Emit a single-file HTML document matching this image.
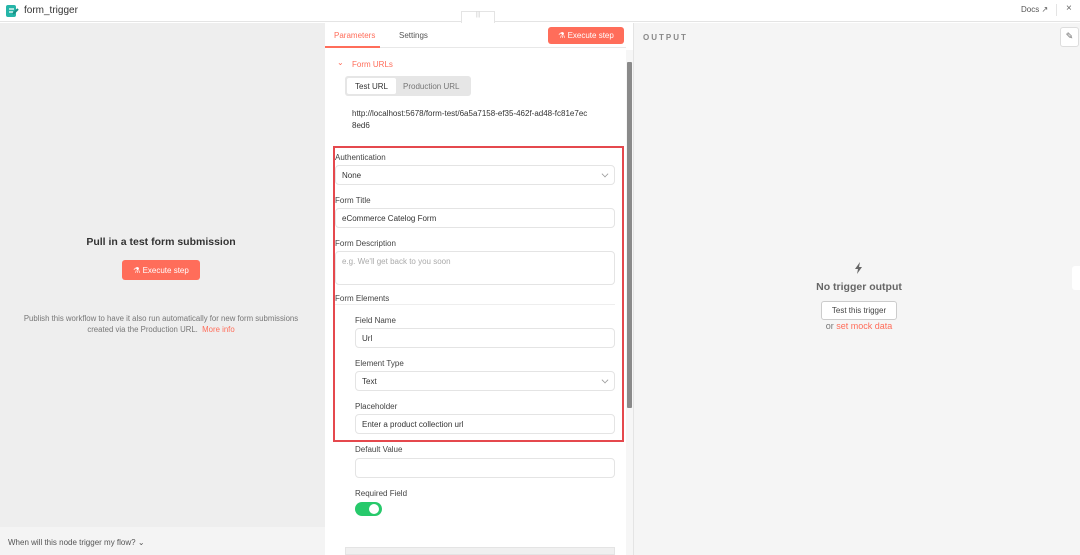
<!DOCTYPE html><html><head><style>
*{margin:0;padding:0;box-sizing:border-box}
body{width:1080px;height:555px;overflow:hidden;font-family:"Liberation Sans",sans-serif;position:relative;background:#fff;color:#333}
.a{position:absolute}
.lbl{font-size:8px;color:#444}
.inp{position:absolute;height:20px;border:1px solid #e4e4e4;border-radius:4px;background:#fff;font-size:8px;color:#333;padding:5px 6px}
.chev{position:absolute;right:6px;top:5px;width:6px;height:6px;border-right:1px solid #999;border-bottom:1px solid #999;transform:rotate(45deg) scale(.8)}
.btn{background:#ff6d5a;color:#fff;border-radius:3px;font-size:8px;text-align:center}
</style></head><body>
<div class="a" style="left:0;top:0;width:1080px;height:22px;border-bottom:1px solid #e4e4e4;background:#fff"></div>
<svg class="a" style="left:6px;top:4px" width="13" height="14" viewBox="0 0 13 14"><rect x="0" y="1" width="10" height="12" rx="2" fill="#25b5a8"/><path d="M3 5h5M3 8h4" stroke="#fff" stroke-width="1.2"/><path d="M7 10l5-5" stroke="#1a8f85" stroke-width="2"/></svg>
<div class="a" style="left:24px;top:5px;font-size:10px;color:#333">form_trigger</div>
<div class="a" style="left:1021px;top:5px;font-size:8px;color:#555">Docs ↗</div>
<div class="a" style="left:1056px;top:4px;width:1px;height:12px;background:#e4e4e4"></div>
<div class="a" style="left:1066px;top:3px;font-size:10px;color:#666">×</div>
<div class="a" style="left:461px;top:11px;width:34px;height:12px;border:1px solid #e4e4e4;border-bottom:none;background:#fff;font-size:6px;color:#ccc;text-align:center">|||</div>
<!-- left -->
<div class="a" style="left:0;top:23px;width:325px;height:504px;background:#eeeeee"></div>
<div class="a" style="left:0;top:527px;width:325px;height:28px;background:#f4f4f4;font-size:8px;color:#555;padding:11px 8px">When will this node trigger my flow? ⌄</div>
<div class="a" style="left:0;top:236px;width:322px;text-align:center;font-size:10.5px;font-weight:bold;color:#333">Pull in a test form submission</div>
<div class="a btn" style="left:122px;top:260px;width:78px;height:20px;padding-top:6px">⚗ Execute step</div>
<div class="a" style="left:0;top:313px;width:322px;text-align:center;font-size:7.8px;color:#777;line-height:11px">Publish this workflow to have it also run automatically for new form submissions<br>created via the Production URL. &nbsp;<span style="color:#ff6d5a">More info</span></div>
<!-- center -->
<div class="a" style="left:325px;top:23px;width:308px;height:532px;background:#fff"></div>
<div class="a" style="left:325px;top:47px;width:301px;height:1px;background:#e8e8e8"></div>
<div class="a" style="left:334px;top:31px;font-size:8px;color:#ff6d5a">Parameters</div>
<div class="a" style="left:325px;top:46px;width:55px;height:2px;background:#ff6d5a"></div>
<div class="a" style="left:399px;top:31px;font-size:8px;color:#555">Settings</div>
<div class="a btn" style="left:548px;top:27px;width:76px;height:17px;padding-top:4px">⚗ Execute step</div>
<div class="a" style="left:626px;top:50px;width:7px;height:505px;background:#f6f6f6"></div>
<div class="a" style="left:627px;top:62px;width:5px;height:346px;background:#8a8a8a;border-radius:1px"></div>
<div class="a" style="left:337px;top:58px;font-size:8px;color:#ff6d5a">⌄</div>
<div class="a" style="left:352px;top:60px;font-size:8px;color:#ff6d5a">Form URLs</div>
<div class="a" style="left:345px;top:76px;width:126px;height:20px;background:#e6e6e6;border-radius:3px"></div>
<div class="a" style="left:347px;top:78px;width:49px;height:16px;background:#fff;border-radius:2px;font-size:8px;text-align:center;padding-top:4px">Test URL</div>
<div class="a" style="left:403px;top:82px;font-size:8px;color:#777">Production URL</div>
<div class="a" style="left:352px;top:108px;font-size:8px;color:#333;line-height:12px">http://localhost:5678/form-test/6a5a7158-ef35-462f-ad48-fc81e7ec<br>8ed6</div>
<div class="a lbl" style="left:335px;top:153px">Authentication</div>
<div class="inp" style="left:335px;top:165px;width:280px">None<span class="chev"></span></div>
<div class="a lbl" style="left:335px;top:196px">Form Title</div>
<div class="inp" style="left:335px;top:208px;width:280px">eCommerce Catelog Form</div>
<div class="a lbl" style="left:335px;top:239px">Form Description</div>
<div class="inp" style="left:335px;top:251px;width:280px;height:34px;color:#aaa">e.g. We'll get back to you soon</div>
<div class="a lbl" style="left:335px;top:294px">Form Elements</div>
<div class="a" style="left:335px;top:304px;width:280px;height:1px;background:#eee"></div>
<div class="a lbl" style="left:355px;top:316px">Field Name</div>
<div class="inp" style="left:355px;top:328px;width:260px">Url</div>
<div class="a lbl" style="left:355px;top:359px">Element Type</div>
<div class="inp" style="left:355px;top:371px;width:260px">Text<span class="chev"></span></div>
<div class="a lbl" style="left:355px;top:402px">Placeholder</div>
<div class="inp" style="left:355px;top:414px;width:260px">Enter a product collection url</div>
<div class="a" style="left:333px;top:146px;width:291px;height:296px;border:2px solid #e5484d"></div>
<div class="a lbl" style="left:355px;top:445px">Default Value</div>
<div class="inp" style="left:355px;top:458px;width:260px"></div>
<div class="a lbl" style="left:355px;top:489px">Required Field</div>
<div class="a" style="left:355px;top:502px;width:27px;height:14px;background:#27c96b;border-radius:7px"></div>
<div class="a" style="left:369px;top:504px;width:10px;height:10px;background:#fff;border-radius:5px"></div>
<div class="a" style="left:345px;top:547px;width:270px;height:8px;background:#f0f0f0;border:1px solid #e4e4e4"></div>
<!-- right -->
<div class="a" style="left:633px;top:23px;width:447px;height:532px;background:#f5f5f5;border-left:1px solid #e4e4e4"></div>
<div class="a" style="left:643px;top:33px;font-size:8px;letter-spacing:2px;color:#888;font-weight:bold">OUTPUT</div>
<div class="a" style="left:1060px;top:27px;width:19px;height:20px;background:#fff;border:1px solid #ddd;border-radius:3px;font-size:9px;color:#666;text-align:center;padding-top:3px">✎</div>
<svg class="a" style="left:854px;top:262px" width="9" height="12" viewBox="0 0 9 12"><path d="M6 0L1 7h3l-1 5 5-7H5z" fill="#666"/></svg>
<div class="a" style="left:780px;top:281px;width:158px;text-align:center;font-size:10.5px;font-weight:bold;color:#666">No trigger output</div>
<div class="a" style="left:821px;top:301px;width:76px;height:19px;background:#fff;border:1px solid #ccc;border-radius:3px;font-size:8px;color:#444;text-align:center;padding-top:4px">Test this trigger</div>
<div class="a" style="left:780px;top:321px;width:158px;text-align:center;font-size:9px;color:#777">or <span style="color:#ff6d5a">set mock data</span></div>
<div class="a" style="left:1072px;top:266px;width:8px;height:24px;background:#fff;border-radius:3px 0 0 3px"></div>
</body></html>
